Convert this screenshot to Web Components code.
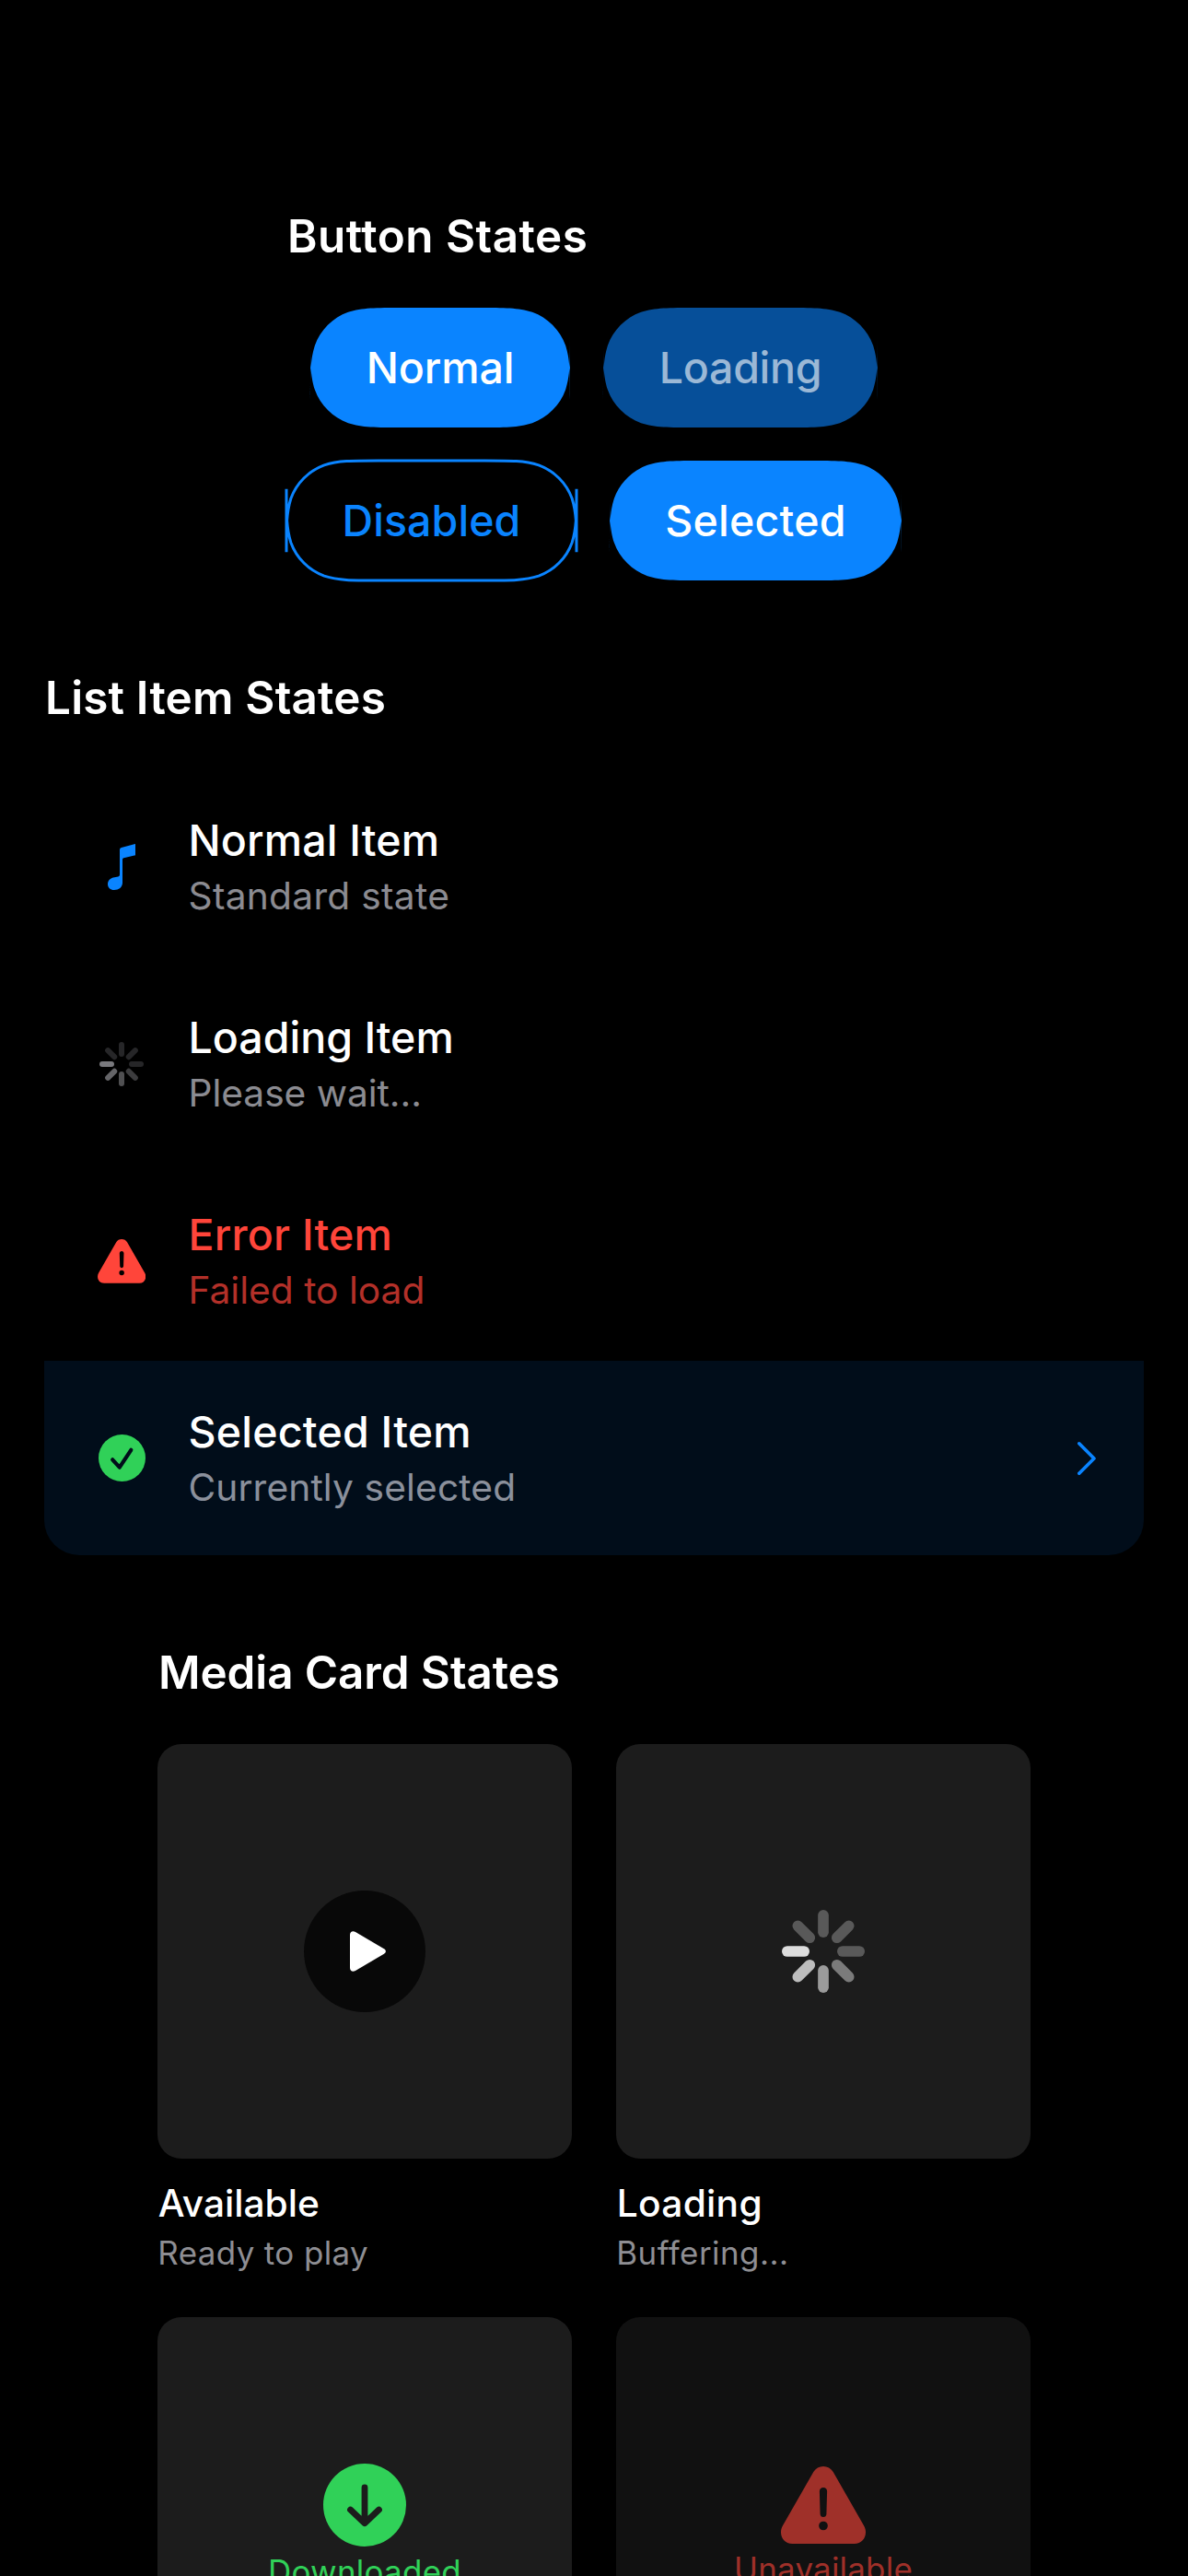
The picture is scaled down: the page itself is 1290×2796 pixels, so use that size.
<!DOCTYPE html>
<html lang="en">
<head>
<meta charset="utf-8">
<title>Component States</title>
<style>
  html, body { margin: 0; background: #000; }
  body {
    font-family: Inter, "Noto Sans", sans-serif;
    color: #fff;
  }
</style>
</head>
<body>
<state-gallery>
  <state-section heading="Button States" tracking="0.5">
    <button-grid>
      <pill-button width="282" tracking="-0.11">Normal</pill-button>
      <pill-button width="298" tracking="-0.28" variant="dimmed">Loading</pill-button>
      <pill-button width="315" tracking="0.07" variant="outline">Disabled</pill-button>
      <pill-button width="317" tracking="0.2">Selected</pill-button>
    </button-grid>
  </state-section>

  <state-section heading="List Item States" tracking="0.2" wide>
    <item-list>
      <list-item>
        <glyph-icon slot="icon" name="music"></glyph-icon>
        <span style="letter-spacing:.16px">Normal Item</span>
        <span slot="detail" style="letter-spacing:.28px">Standard state</span>
      </list-item>
      <list-item>
        <activity-spinner slot="icon" size="48" bar="6" tint="#8e8e93"></activity-spinner>
        <span>Loading Item</span>
        <span slot="detail" style="letter-spacing:-.04px">Please wait...</span>
      </list-item>
      <list-item state="error">
        <glyph-icon slot="icon" name="warning"></glyph-icon>
        <span style="letter-spacing:.2px">Error Item</span>
        <span slot="detail">Failed to load</span>
      </list-item>
      <list-item state="selected">
        <glyph-icon slot="icon" name="check"></glyph-icon>
        <span style="letter-spacing:.23px">Selected Item</span>
        <span slot="detail" style="letter-spacing:.13px">Currently selected</span>
        <glyph-icon slot="accessory" name="chevron"></glyph-icon>
      </list-item>
    </item-list>
  </state-section>

  <state-section heading="Media Card States" tracking="-0.09">
    <card-grid>
      <media-card>
        <play-badge slot="art"></play-badge>
        <span slot="title">Available</span>
        <span slot="subtitle" style="letter-spacing:.4px">Ready to play</span>
      </media-card>
      <media-card>
        <activity-spinner slot="art" size="90" bar="11.7" tint="#fff"></activity-spinner>
        <span slot="title" style="letter-spacing:.29px">Loading</span>
        <span slot="subtitle" style="letter-spacing:.47px">Buffering...</span>
      </media-card>
      <media-card>
        <status-mark slot="art" color="#30d158" tracking="0.29">
          <glyph-icon slot="icon" name="download"></glyph-icon>Downloaded
        </status-mark>
      </media-card>
      <media-card state="unavailable">
        <status-mark slot="art" color="#9f3029" tracking="0.24">
          <glyph-icon slot="icon" name="warning-large"></glyph-icon>Unavailable
        </status-mark>
      </media-card>
    </card-grid>
  </state-section>
</state-gallery>

<script>
const define = (name, markup, setup) => {
  const template = document.createElement('template');
  template.innerHTML = markup;
  customElements.define(name, class extends HTMLElement {
    constructor() {
      super();
      this.attachShadow({ mode: 'open' }).append(template.content.cloneNode(true));
    }
    connectedCallback() { if (setup) setup(this, this.shadowRoot); }
  });
};

define('state-gallery', `
  <style>
    :host {
      display: flex; flex-direction: column; align-items: center; gap: 96px;
      box-sizing: border-box; height: 2796px; padding-top: 225px; overflow: hidden;
    }
    ::slotted(*) { flex: none; }
  </style>
  <slot></slot>`);

define('state-section', `
  <style>
    :host { display: flex; flex-direction: column; gap: 48px; }
    :host([wide]) { align-self: stretch; margin: 0 48px; }
    h2 { margin: 0; padding: 1px 0 0 1px; font-size: 49.4px; line-height: 60px; font-weight: 600; white-space: nowrap; }
  </style>
  <h2></h2><slot></slot>`, (el, root) => {
  const h = root.querySelector('h2');
  h.textContent = el.getAttribute('heading');
  h.style.letterSpacing = el.getAttribute('tracking') + 'px';
});

define('button-grid', `
  <style>
    :host { display: flex; flex-wrap: wrap; justify-content: center; gap: 36px; width: 668px; }
  </style>
  <slot></slot>`);

/* Continuous-corner pill. The corner arcs run past the middle of each side,
   so the outline variant shows short straight bars at both ends. */
const pillPath = (w, h) => {
  const r = h / 2, f = n => (n * r).toFixed(3);
  const X = n => (w - n * r).toFixed(3), Y = n => (h - n * r).toFixed(3);
  return `M${f(1.52866)} 0L${X(1.52866)} 0C${X(1.08849)} 0 ${X(.8684)} 0 ${X(.63149)} ${f(.07491)}`
    + `C${X(.37282)} ${f(.16906)} ${X(.16906)} ${f(.37282)} ${X(.07491)} ${f(.63149)}`
    + `C${X(0)} ${f(.8684)} ${X(0)} ${f(1.08849)} ${X(0)} ${f(1.52866)}L${X(0)} ${Y(1.52866)}`
    + `C${X(0)} ${Y(1.08849)} ${X(0)} ${Y(.8684)} ${X(.07491)} ${Y(.63149)}`
    + `C${X(.16906)} ${Y(.37282)} ${X(.37282)} ${Y(.16906)} ${X(.63149)} ${Y(.07491)}`
    + `C${X(.8684)} ${h} ${X(1.08849)} ${h} ${X(1.52866)} ${h}L${f(1.52866)} ${h}`
    + `C${f(1.08849)} ${h} ${f(.8684)} ${h} ${f(.63149)} ${Y(.07491)}`
    + `C${f(.37282)} ${Y(.16906)} ${f(.16906)} ${Y(.37282)} ${f(.07491)} ${Y(.63149)}`
    + `C0 ${Y(.8684)} 0 ${Y(1.08849)} 0 ${Y(1.52866)}L0 ${f(1.52866)}`
    + `C0 ${f(1.08849)} 0 ${f(.8684)} ${f(.07491)} ${f(.63149)}`
    + `C${f(.16906)} ${f(.37282)} ${f(.37282)} ${f(.16906)} ${f(.63149)} ${f(.07491)}`
    + `C${f(.8684)} 0 ${f(1.08849)} 0 ${f(1.52866)} 0Z`;
};

define('pill-button', `
  <style>
    :host { display: block; }
    button {
      display: grid; place-items: center; width: 100%; height: 130px;
      margin: 0; padding: 0; border: 0; background: none;
      color: inherit; font: 500 46.5px/57px Inter, sans-serif;
    }
    svg, span { grid-area: 1 / 1; }
    svg { overflow: visible; display: block; fill: #0a84ff; }
    span { position: relative; white-space: nowrap; }
    :host([variant="dimmed"]) svg { fill: #064f99; }
    :host([variant="dimmed"]) span { color: #9bb8d6; }
    :host([variant="outline"]) svg { fill: none; stroke: #0a84ff; stroke-width: 3; }
    :host([variant="outline"]) span { color: #0a84ff; }
  </style>
  <button><svg height="130"><path/></svg><span><slot></slot></span></button>`, (el, root) => {
  const w = +el.getAttribute('width');
  el.style.width = w + 'px';
  root.querySelector('svg').setAttribute('width', w);
  root.querySelector('path').setAttribute('d', pillPath(w, 130));
  root.querySelector('span').style.letterSpacing = el.getAttribute('tracking') + 'px';
});

define('item-list', `
  <style>:host { display: flex; flex-direction: column; gap: 3px; }</style>
  <slot></slot>`);

define('list-item', `
  <style>
    :host { display: flex; align-items: center; gap: 36px; box-sizing: border-box; height: 211px; padding: 48px; }
    .icon { width: 72px; display: flex; justify-content: center; }
    .text { flex: 1; display: flex; flex-direction: column; gap: 6px; padding-left: .5px; white-space: nowrap; }
    .title { font-size: 46.5px; line-height: 58px; font-weight: 500; }
    .detail { font-size: 40.7px; line-height: 51px; color: rgba(235, 235, 245, .6); }
    :host([state="error"]) .icon { padding-top: 1px; }
    :host([state="error"]) .title { color: #ff453a; }
    :host([state="error"]) .detail { color: #b33029; }
    :host([state="selected"]) { background: #010d1a; border-radius: 0 0 38px 38px; }
  </style>
  <div class="icon"><slot name="icon"></slot></div>
  <div class="text">
    <div class="title"><slot></slot></div>
    <div class="detail"><slot name="detail"></slot></div>
  </div>
  <slot name="accessory"></slot>`);

const warning = (w, h) => `
  <svg width="${w}" height="${h}" viewBox="0 0 276 252">
    <path fill-rule="evenodd" d="M138 0C151 0 163 6 170 18L270 193C274 200 276 207 276 214C276 236 262 252 239 252H37C14 252 0 236 0 214C0 207 2 200 6 193L106 18C113 6 125 0 138 0Z
      M138 69C130 69 125.500 74 125.700 82L127.800 155C128 161 132 165 138 165C144 165 148 161 148.200 155L150.300 82C150.500 74 146 69 138 69Z
      M138 179A14.500 14.500 0 1 0 138 208A14.500 14.500 0 1 0 138 179Z"/>
  </svg>`;
const glyphs = {
  music: ['#0a84ff', `<svg width="30.700" height="50" viewBox="0 0 92 150">
    <path d="M39 18.500Q39 13 44.500 11.700L86.500 .5Q92 -.8 92 5V32Q92 36.500 87 37.700L52 45.800Q48 46.800 48 51V126C48 141 36 150 21 150C8 150 0 142 0 131C0 117 10 111 22 108.500L34 106.500Q39 105.500 39 100Z"/></svg>`],
  warning: ['#ff453a', warning(52.3, 47.7)],
  'warning-large': ['#9f3029', warning(92, 84)],
  check: ['#30d158', `<svg width="51" height="51" viewBox="0 0 51 51"><circle cx="25.500" cy="25.500" r="25.500"/>
    <path d="M15.200 27.300L22.800 35.700L35.300 16.800" fill="none" stroke="#010d1a" stroke-width="4.200" stroke-linecap="round" stroke-linejoin="round"/></svg>`],
  chevron: ['none', `<svg width="24" height="38" viewBox="0 0 24 38">
    <path d="M1.800 2.800L18 19L1.800 35.200" stroke="#0a84ff" stroke-width="3.600" stroke-linecap="round" stroke-linejoin="round"/></svg>`],
  download: ['#30d158', `<svg width="90" height="90" viewBox="0 0 90 90"><circle cx="45" cy="45" r="45"/>
    <path d="M45 26V62M29.500 50L45 64.700L60.500 50" fill="none" stroke="#1c1c1c" stroke-width="6.800" stroke-linecap="round" stroke-linejoin="round"/></svg>`],
};

define('glyph-icon', `
  <style>:host { display: block; } svg { display: block; }</style>
  <div></div>`, (el, root) => {
  const [color, svg] = glyphs[el.getAttribute('name')];
  const box = root.querySelector('div');
  box.style.fill = color;
  box.innerHTML = svg;
});

/* Eight bars, clockwise from the top. */
const fades = [.27, .27, .27, .42, .56, .71, .85, .27];
define('activity-spinner', `
  <style>:host { display: block; } svg { display: block; }</style>
  <svg viewBox="-45 -45 90 90"></svg>`, (el, root) => {
  const size = +el.getAttribute('size'), svg = root.querySelector('svg');
  const w = +el.getAttribute('bar') * 90 / size;
  svg.setAttribute('width', size);
  svg.setAttribute('height', size);
  svg.innerHTML = fades.map((o, i) =>
    `<rect x="${-w / 2}" y="-45" width="${w}" height="30" rx="${w / 2}" fill="${el.getAttribute('tint')}" opacity="${o}" transform="rotate(${i * 45})"/>`).join('');
});

define('play-badge', `
  <style>
    :host { display: grid; place-items: center; width: 132px; height: 132px; border-radius: 50%; background: #080808; margin-top: 159px; }
    svg { display: block; margin-left: 6px; }
  </style>
  <svg width="39" height="44" viewBox="0 0 39 44">
    <path d="M0 4C0 .6 3 -.7 6 1L37 19.300C39.500 20.800 39.500 23.200 37 24.700L6 43C3 44.700 0 43.400 0 40Z" fill="#fff"/>
  </svg>`);

define('status-mark', `
  <style>
    :host { display: flex; flex-direction: column; align-items: center; gap: 5px; font-size: 34.9px; line-height: 44px; }
    .label { white-space: nowrap; }
  </style>
  <slot name="icon"></slot><div class="label"><slot></slot></div>`, (el, root) => {
  el.style.color = el.getAttribute('color');
  root.querySelector('.label').style.letterSpacing = el.getAttribute('tracking') + 'px';
});

define('card-grid', `
  <style>:host { display: grid; grid-template-columns: 450px 450px; gap: 48px; }</style>
  <slot></slot>`);

define('media-card', `
  <style>
    :host { display: flex; flex-direction: column; }
    .art { display: flex; justify-content: center; height: 450px; border-radius: 26px; background: #1c1c1c; }
    .art ::slotted(activity-spinner) { margin-top: 180px; }
    .art ::slotted(status-mark) { margin-top: 159px; }
    :host([state="unavailable"]) .art { background: #111; }
    :host([state="unavailable"]) ::slotted(status-mark) { margin-top: 162px; }
    .title { margin-top: 24px; padding-left: .7px; font-size: 40.7px; line-height: 50px; font-weight: 500; min-height: 50px; }
    .subtitle { margin-top: 6px; padding-left: .3px; font-size: 34.9px; line-height: 44px; min-height: 44px; color: #8e8e93; }
  </style>
  <div class="art"><slot name="art"></slot></div>
  <div class="title"><slot name="title"></slot></div>
  <div class="subtitle"><slot name="subtitle"></slot></div>`);
</script>
</body>
</html>
